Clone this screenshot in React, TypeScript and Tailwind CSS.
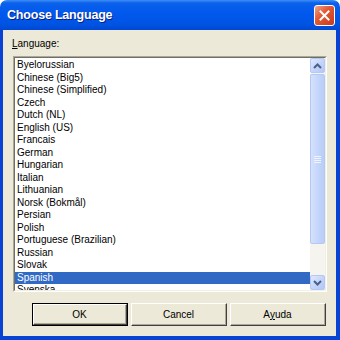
import { useState } from 'react';

const languages = [
  'Byelorussian',
  'Chinese (Big5)',
  'Chinese (Simplified)',
  'Czech',
  'Dutch (NL)',
  'English (US)',
  'Francais',
  'German',
  'Hungarian',
  'Italian',
  'Lithuanian',
  'Norsk (Bokmål)',
  'Persian',
  'Polish',
  'Portuguese (Brazilian)',
  'Russian',
  'Slovak',
  'Spanish',
  'Svenska',
  'Turkish',
];

function Chevron({ up }: { up?: boolean }) {
  return (
    <svg width="9" height="6" viewBox="0 0 9 6" className={up ? '' : 'rotate-180'}>
      <path d="M1 5 L4.5 1.5 L8 5" fill="none" stroke="#4d6185" strokeWidth="2" />
    </svg>
  );
}

function ArrowButton({ up }: { up?: boolean }) {
  return (
    <div className="h-[15px] w-[15px] flex items-center justify-center rounded-[2px] border border-[#b3c8f5] bg-[linear-gradient(135deg,#dfe8fe_0%,#c3d4fb_55%,#b2c7f7_100%)]">
      <Chevron up={up} />
    </div>
  );
}

function Button({ children, isDefault }: { children: React.ReactNode; isDefault?: boolean }) {
  return (
    <div className={isDefault ? 'w-[96px] h-[23px] border border-black' : 'w-[96px] h-[23px]'}>
      <div className="h-full border-t border-l border-white border-r border-b border-r-[#404040] border-b-[#404040]">
        <div className="h-full flex items-center justify-center border-r border-b border-r-[#aca899] border-b-[#aca899] text-[10px] text-black">
          {children}
        </div>
      </div>
    </div>
  );
}

export default function App() {
  const [selected, setSelected] = useState('Spanish');

  return (
    <div className="w-[340px] h-[340px] bg-white font-['Liberation_Sans',Arial,sans-serif]">
      <div className="w-full h-full flex flex-col rounded-t-[7px] overflow-hidden">
        {/* title bar */}
        <div className="h-[30px] flex items-center justify-between pl-[7px] pr-[5px] bg-[linear-gradient(180deg,#3f8ff7_0%,#0b61ea_10%,#0058ee_45%,#0054e3_80%,#0048d4_100%)]">
          <span className="text-white font-bold text-[12.5px] tracking-[-0.2px] [text-shadow:1px_1px_0_#0a1f80]">
            Choose Language
          </span>
          <div className="w-[21px] h-[21px] flex items-center justify-center rounded-[3px] border border-white bg-[linear-gradient(135deg,#f0a58c_0%,#e25b36_40%,#c9391a_100%)]">
            <svg width="11" height="11" viewBox="0 0 11 11">
              <path d="M1.5 1.5 L9.5 9.5 M9.5 1.5 L1.5 9.5" stroke="white" strokeWidth="2" strokeLinecap="square" />
            </svg>
          </div>
        </div>

        {/* client area */}
        <div className="flex-1 flex flex-col bg-[#ece9d8] border-l-[3px] border-r-4 border-b-4 border-[#0843d6]">
          <div className="pl-[9px] pt-[6px] h-[26px] text-[10px] text-black">
            <u>L</u>anguage:
          </div>

          <div className="ml-[10px] w-[314px] h-[236px] border-t border-l border-t-[#aca899] border-l-[#aca899] border-b border-r border-white">
            <div className="h-full flex border-t border-l border-t-[#716f64] border-l-[#716f64] border-b border-r border-b-[#f1efe2] border-r-[#f1efe2] bg-white">
              <div className="flex-1 overflow-hidden pt-[1px] text-[10px]">
                {languages.map((lang) => (
                  <div
                    key={lang}
                    onClick={() => setSelected(lang)}
                    className={
                      lang === selected
                        ? 'h-[12.5px] leading-[12.5px] pl-[2px] whitespace-nowrap bg-[#316ac5] text-white'
                        : 'h-[12.5px] leading-[12.5px] pl-[2px] whitespace-nowrap text-black'
                    }
                  >
                    {lang}
                  </div>
                ))}
              </div>

              {/* scrollbar */}
              <div className="w-[15px] flex flex-col bg-[#f5f4ef]">
                <ArrowButton up />
                <div className="flex-1 pt-[1px]">
                  <div className="h-[170px] rounded-[2px] border border-[#b4c8f6] bg-[linear-gradient(90deg,#d5e1fc_0%,#c6d6fb_50%,#b9cdf8_100%)] flex items-center justify-center">
                    <div className="flex flex-col gap-[1px]">
                      <div className="w-[7px] h-[1px] bg-[#eef3fe]" />
                      <div className="w-[7px] h-[1px] bg-[#eef3fe]" />
                      <div className="w-[7px] h-[1px] bg-[#eef3fe]" />
                      <div className="w-[7px] h-[1px] bg-[#eef3fe]" />
                    </div>
                  </div>
                </div>
                <ArrowButton />
              </div>
            </div>
          </div>

          <div className="mt-[11px] pl-[29px] flex gap-[3px]">
            <Button isDefault>OK</Button>
            <Button>Cancel</Button>
            <Button>
              A<u>y</u>uda
            </Button>
          </div>
        </div>
      </div>
    </div>
  );
}
